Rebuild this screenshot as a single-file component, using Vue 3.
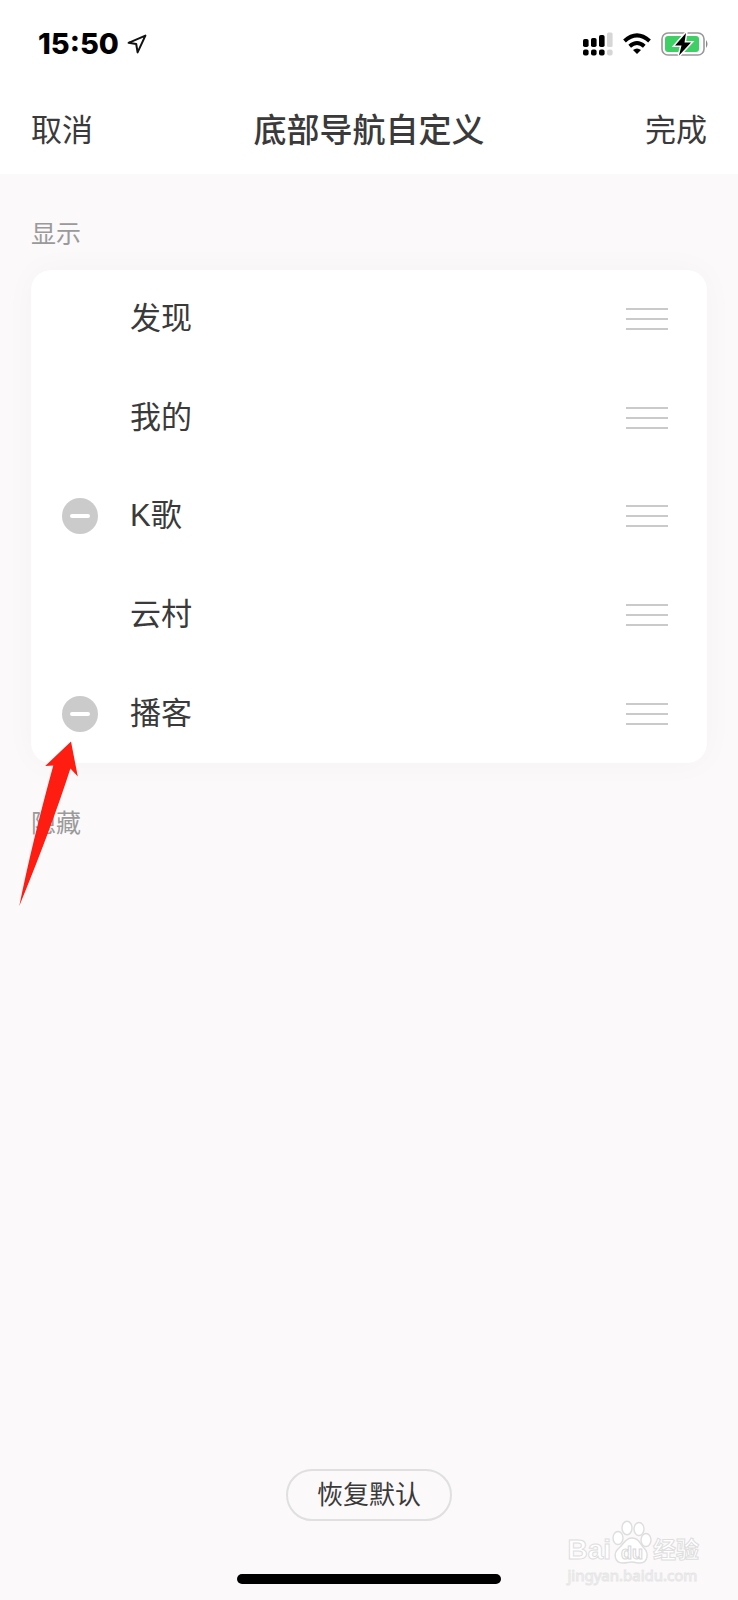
<template>
  <div class="page">
    <header class="top">
      <div class="status-bar">
        <div class="status-left">
          <span class="time">15:50</span>
          <svg class="location" width="20" height="20" viewBox="0 0 20 20">
            <path
              d="M1.6 8.8 L18.4 1.6 L10.6 18.4 L9.2 10 Z"
              fill="none"
              stroke="#111"
              stroke-width="2"
              stroke-linejoin="round"
            />
          </svg>
        </div>
        <div class="status-right">
          <svg width="30" height="24" viewBox="0 0 30 24">
            <g fill="#000">
              <rect x="0" y="7" width="5.6" height="8" rx="1.8" />
              <rect x="8" y="6" width="5.6" height="9" rx="1.8" />
              <rect x="16" y="3" width="5.6" height="12" rx="1.8" />
              <rect x="0" y="17.5" width="5.6" height="6" rx="2" />
              <rect x="8" y="17.5" width="5.6" height="6" rx="2" />
              <rect x="16" y="17.5" width="5.6" height="6" rx="2" />
            </g>
            <g fill="#d6d6d6">
              <rect x="24" y="0.5" width="5.6" height="14.5" rx="1.5" />
              <rect x="24" y="17.5" width="5.6" height="6" rx="2" />
            </g>
          </svg>
          <svg width="28" height="22" viewBox="0 0 28 22">
            <g fill="none" stroke="#000" stroke-width="4">
              <path d="M1.5 8 Q14 -3.2 26.5 8" />
              <path d="M6.7 13.2 Q14 6.8 21.3 13.2" />
            </g>
            <path d="M10 17 Q14 13.8 18 17 L14 21 Z" fill="#000" />
          </svg>
          <svg width="48" height="26" viewBox="0 0 48 26">
            <rect
              x="1"
              y="2"
              width="42"
              height="22"
              rx="6"
              fill="#fff"
              stroke="#999"
              stroke-width="1.6"
            />
            <rect x="4" y="5" width="34" height="16" rx="3" fill="#3fd065" />
            <path d="M45 9 Q48 13 45 17 Z" fill="#888" />
            <path
              d="M25 2 L14 14.5 L20.5 14.5 L18 24.5 L30 11.5 L23.5 11.5 Z"
              fill="#000"
              stroke="#fff"
              stroke-width="3"
              paint-order="stroke"
            />
          </svg>
        </div>
      </div>
      <nav class="nav">
        <button class="nav-button" type="button">取消</button>
        <h1 class="title">底部导航自定义</h1>
        <button class="nav-button done" type="button">完成</button>
      </nav>
    </header>

    <main class="content">
      <h2 class="section-title">显示</h2>
      <div class="card">
        <ul class="list">
          <li v-for="item in items" :key="item.name" class="row">
            <div class="slot">
              <button
                v-if="item.removable"
                class="remove"
                type="button"
                @click="removeItem(item)"
              >
                <span class="minus"></span>
              </button>
            </div>
            <span class="label">{{ item.name }}</span>
            <button class="handle" type="button">
              <span class="line"></span>
              <span class="line"></span>
              <span class="line"></span>
            </button>
          </li>
        </ul>
        <svg class="arrow" width="62" height="168" viewBox="0 0 62 168">
          <path
            d="M53 1.5 L59.8 36.5 L52.4 28.5 Q34 86 1.3 166 Q14 103 35.3 25.6 L27.2 26 Z"
            fill="#ff1d12"
          />
        </svg>
      </div>
      <h2 class="section-title hidden-title">隐藏</h2>
      <ul v-if="hiddenItems.length" class="card hidden-list">
        <li v-for="item in hiddenItems" :key="item.name" class="row">
          <div class="slot"></div>
          <span class="label">{{ item.name }}</span>
        </li>
      </ul>
    </main>

    <footer class="footer">
      <button class="reset" type="button" @click="resetItems">恢复默认</button>
      <div class="home-bar"></div>
    </footer>

    <div class="watermark">
      <div class="brand">
        <span class="brand-text">Bai</span>
        <svg class="paw" width="42" height="46" viewBox="0 0 42 46">
          <g fill="#fff" stroke="#dedede" stroke-width="1.4">
            <ellipse cx="7" cy="18" rx="5" ry="6.5" />
            <ellipse cx="16" cy="8" rx="5" ry="6.7" />
            <ellipse cx="28" cy="9" rx="5" ry="6.5" />
            <ellipse cx="35" cy="20" rx="5" ry="6.5" />
            <path
              d="M21 18 C28 18 29 24 33 28 C38 33 37 43 29 43 C25 43 24 42 21 42 C17 42 16 43 12 43 C3 43 2 33 8 28 C13 24 14 18 21 18 Z"
            />
          </g>
          <text
            x="21"
            y="39"
            text-anchor="middle"
            font-family="Liberation Sans, sans-serif"
            font-weight="700"
            font-size="18"
            fill="#fff"
            stroke="#d8d8d8"
            stroke-width="1"
          >
            du
          </text>
        </svg>
        <span class="brand-text brand-cn">经验</span>
      </div>
      <div class="site">jingyan.baidu.com</div>
    </div>
  </div>
</template>

<script setup>
import { ref } from "vue";

const defaults = [
  { name: "发现", removable: false },
  { name: "我的", removable: false },
  { name: "K歌", removable: true },
  { name: "云村", removable: false },
  { name: "播客", removable: true },
];

const items = ref([...defaults]);
const hiddenItems = ref([]);

const removeItem = (item) => {
  items.value = items.value.filter((i) => i.name !== item.name);
  hiddenItems.value.push(item);
};

const resetItems = () => {
  items.value = [...defaults];
  hiddenItems.value = [];
};
</script>

<style>
body {
  margin: 0;
  background-color: #fbf9fa;
}
</style>

<style scoped>
.page {
  position: relative;
  display: flex;
  flex-direction: column;
  min-height: 100vh;
  background-color: #fbf9fa;
  color: #3a3a3a;
  font-family: "Liberation Sans", "Noto Sans CJK SC", sans-serif;
  overflow: hidden;
}
button {
  padding: 0;
  border: none;
  background: none;
  color: inherit;
  font-family: inherit;
  cursor: pointer;
}
.top {
  background-color: #fff;
}
.status-bar {
  display: flex;
  justify-content: space-between;
  align-items: center;
  height: 88px;
  padding: 0 29px 0 38px;
}
.status-left {
  display: flex;
  align-items: center;
  gap: 8px;
}
.time {
  font-family: Inter, sans-serif;
  font-weight: 800;
  font-size: 29px;
  line-height: 32px;
  color: #000;
}
.status-right {
  display: flex;
  align-items: center;
  gap: 10px;
}
.nav {
  display: grid;
  grid-template-columns: 1fr auto 1fr;
  align-items: center;
  height: 86px;
  padding: 0 31px;
}
.nav-button {
  justify-self: start;
  font-size: 31px;
  line-height: 44px;
}
.done {
  justify-self: end;
}
.title {
  margin: 0;
  font-size: 33px;
  font-weight: 500;
  line-height: 44px;
}
.content {
  padding: 42px 31px 0;
}
.section-title {
  margin: 0;
  font-size: 25px;
  font-weight: 400;
  line-height: 36px;
  color: #9a9a9a;
}
.hidden-title {
  margin-top: 42px;
}
.card {
  position: relative;
  margin-top: 18px;
  border-radius: 20px;
  background-color: #fff;
  box-shadow: 0 0 32px rgba(0, 0, 0, 0.03);
}
.list {
  display: grid;
  grid-auto-rows: 1fr;
  min-height: 493px;
  margin: 0;
  padding: 0;
  list-style: none;
}
.hidden-list {
  margin-bottom: 0;
  padding: 0;
  list-style: none;
}
.row {
  display: flex;
  align-items: center;
  min-height: 98px;
  padding: 0 39px 0 31px;
}
.slot {
  width: 36px;
  height: 36px;
  margin-right: 32px;
}
.remove {
  display: flex;
  align-items: center;
  justify-content: center;
  width: 36px;
  height: 36px;
  border-radius: 50%;
  background-color: #cbcbcb;
}
.minus {
  width: 20px;
  height: 4px;
  border-radius: 2px;
  background-color: #fff;
}
.label {
  flex: 1;
  font-size: 31px;
  line-height: 44px;
}
.handle {
  display: flex;
  flex-direction: column;
  gap: 8px;
  width: 42px;
}
.line {
  height: 2px;
  width: 100%;
  background-color: #cacaca;
}
.arrow {
  position: absolute;
  left: -13px;
  bottom: -145px;
  z-index: 1;
  pointer-events: none;
}
.footer {
  display: flex;
  flex-direction: column;
  align-items: center;
  gap: 53px;
  margin-top: auto;
  padding-bottom: 16px;
}
.reset {
  padding: 0 29px;
  border: 2px solid #e0e0e0;
  border-radius: 26px;
  font-size: 26px;
  line-height: 48px;
}
.home-bar {
  width: 264px;
  height: 10px;
  border-radius: 5px;
  background-color: #000;
}
.watermark {
  position: absolute;
  right: 39px;
  bottom: 16px;
  color: #fff;
  pointer-events: none;
}
.brand {
  display: flex;
  align-items: flex-end;
  height: 46px;
}
.brand-text {
  font-weight: 700;
  font-size: 28px;
  line-height: 32px;
  -webkit-text-stroke: 1px #dedede;
}
.brand-cn {
  font-size: 23px;
}
.site {
  font-family: "Noto Sans", sans-serif;
  font-size: 15px;
  line-height: 18px;
  -webkit-text-stroke: 1px #e6e6e6;
}
</style>
